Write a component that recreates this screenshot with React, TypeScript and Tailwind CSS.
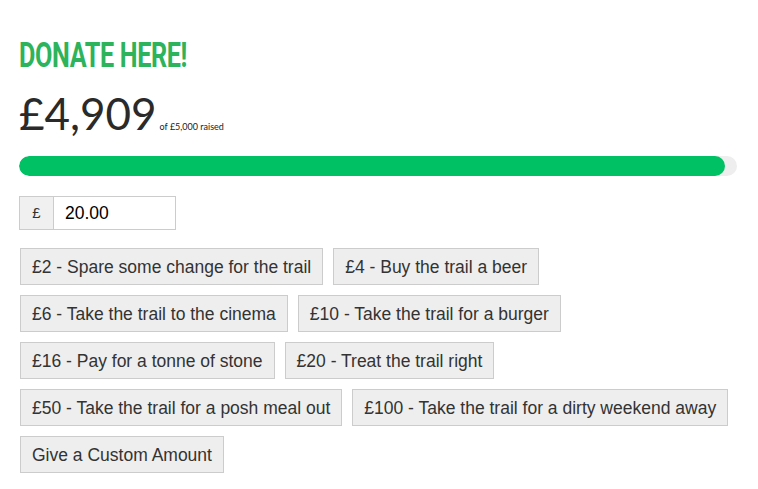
import React from "react";

const options = [
  ["£2 - Spare some change for the trail", "£4 - Buy the trail a beer"],
  ["£6 - Take the trail to the cinema", "£10 - Take the trail for a burger"],
  ["£16 - Pay for a tonne of stone", "£20 - Treat the trail right"],
  ["£50 - Take the trail for a posh meal out", "£100 - Take the trail for a dirty weekend away"],
  ["Give a Custom Amount"],
];

export default function App() {
  return (
    <div className="w-[758px] h-[489px] bg-white pl-[19px] pr-[21px] pt-[38px] font-['Liberation_Sans',Arial,sans-serif] text-[#333]">
      <h1 className="h-[35px] font-['Roboto',sans-serif] font-bold text-[#2db35b] text-[35px] leading-[35px] tracking-[-0.5px] whitespace-nowrap origin-left scale-x-[0.72]">
        DONATE HERE!
      </h1>
      <div className="flex items-baseline mt-[18px] h-[44px]">
        <span className="font-['Lato',sans-serif] text-[44px] leading-[44px] text-[#2a2a2a]">£4,909</span>
        <span className="font-['Lato',sans-serif] text-[9px] leading-[12px] text-[#222] ml-[3px]">of £5,000 raised</span>
      </div>
      <div className="mt-[21px] h-[20px] w-[718px] rounded-full bg-[#eeeeee] overflow-hidden">
        <div className="h-full w-[706px] rounded-full bg-[#00c163]" />
      </div>
      <div className="mt-[20px] flex h-[34px] w-[157px] border border-[#cccccc]">
        <div className="w-[34px] flex items-center justify-center bg-[#f0f0f0] border-r border-[#cccccc] text-[15px] text-[#333]">£</div>
        <div className="flex-1 flex items-center pl-[11px] text-[17.5px] text-black">20.00</div>
      </div>
      <div className="mt-[18px] flex flex-col gap-[10px] pl-[1px]">
        {options.map((row, i) => (
          <div key={i} className="flex gap-[10px]">
            {row.map((t) => (
              <button
                key={t}
                className="h-[37px] px-[11px] bg-[#eeeeee] border border-[#cccccc] text-[17.5px] leading-[20px] text-[#333] whitespace-nowrap"
              >
                {t}
              </button>
            ))}
          </div>
        ))}
      </div>
    </div>
  );
}
